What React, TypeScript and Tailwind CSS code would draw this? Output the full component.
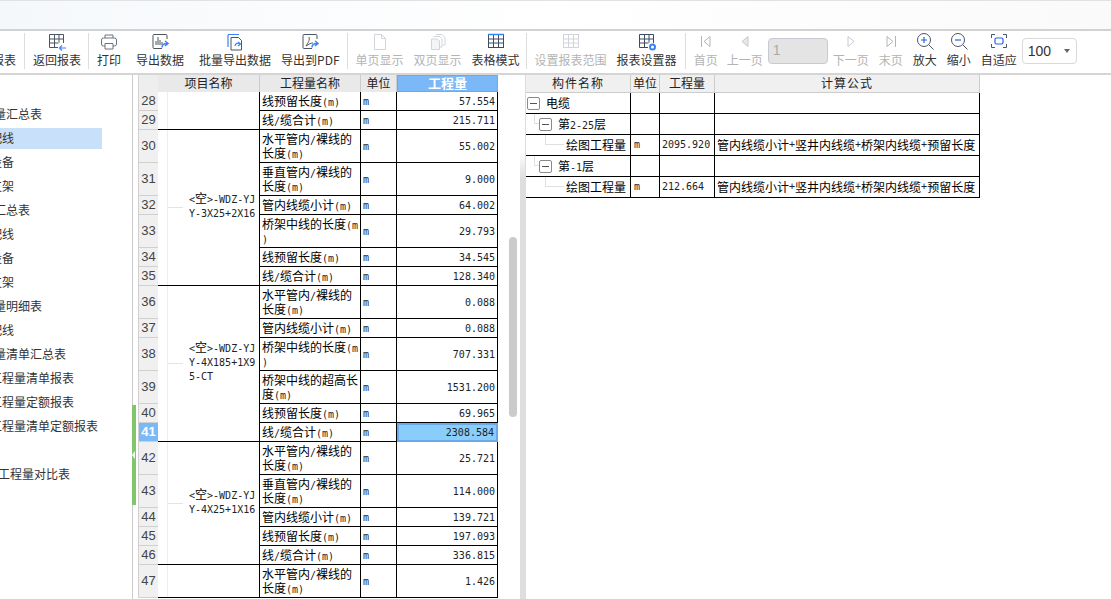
import React from "react";

const CJK = '"Noto Sans CJK SC", sans-serif';

// table text: ascii is half the width of a chinese char, like the old song font
const Mixed = ({ text }: { text: string }) => (
  <>
    {text.split(/([\x00-\x7f]+)/).map((part, i) =>
      /^[\x00-\x7f]+$/.test(part) ? (
        <span key={i} className="font-['DejaVu_Sans_Mono',monospace] text-[10px] leading-[10px] text-[#222]">
          {part}
        </span>
      ) : (
        <span key={i}>{part}</span>
      ),
    )}
  </>
);

const GridIcon = ({ color, top }: { color: string; top?: string }) => (
  <>
    <rect x="2.5" y="2.5" width="15" height="13" fill="none" stroke={color} />
    <path d="M2.5 7h15M2.5 11h15M7.5 2.5v13M12.5 2.5v13" stroke={color} fill="none" />
    {top && <path d="M2 2.5h16" stroke={top} strokeWidth="1.5" />}
  </>
);

const Arrow = () => <path d="M12 15.5c0-3 2-4 5-4M15 9l3 2.5-3 2.5" stroke="#3b82f6" strokeWidth="1.5" fill="none" />;

const icons: Record<string, React.ReactNode> = {
  back: (
    <>
      <path d="M11 15.5H2.5v-13h14V11M2.5 7h14M2.5 11h9M7.5 2.5v13M12 2.5v8" stroke="#4b5563" fill="none" />
      <path d="M19 16h-6M15 13.5 12.5 16l2.5 2.5" stroke="#3b82f6" strokeWidth="1.2" fill="none" />
    </>
  ),
  print: (
    <>
      <path d="M6 6V3h8v3" stroke="#6b7280" fill="none" />
      <rect x="2.5" y="6" width="15" height="8" rx="2" stroke="#6b7280" fill="none" />
      <path d="M6 11.5h8V17H6z" stroke="#6b7280" fill="white" />
    </>
  ),
  data: (
    <>
      <path d="M17 7V3.5a1 1 0 0 0-1-1H4a1 1 0 0 0-1 1v12a1 1 0 0 0 1 1h8" stroke="#4b5563" fill="none" />
      <path d="M6 13V9M8 13V5M10 13V8M12 13V10" stroke="#4b5563" fill="none" />
      <Arrow />
    </>
  ),
  batch: (
    <>
      <path d="M3 15V3.5a1 1 0 0 1 1-1h10" stroke="#3b82f6" strokeWidth="1.2" fill="none" />
      <path d="M6 5.5h7.500l3 3V18H6z" stroke="#4b5563" fill="white" />
      <path d="M10 14a3 3 0 0 1 5-2M13 10l2.500 2-2.500 2" stroke="#3b82f6" strokeWidth="1.300" fill="none" />
    </>
  ),
  pdf: (
    <>
      <path d="M17 7V3.500a1 1 0 0 0-1-1H4a1 1 0 0 0-1 1v12a1 1 0 0 0 1 1h8" stroke="#4b5563" fill="none" />
      <path d="M9 5c1 3-1 6-3 9 3-2 5-3 7-3" stroke="#4b5563" fill="none" />
      <Arrow />
    </>
  ),
  single: <path d="M4.500 2.500h7l4 4v11h-11zM11.500 2.500v4h4" stroke="#d1d5db" fill="none" />,
  double: (
    <>
      <path d="M8 2.500h6l3 3V13h-2" stroke="#d1d5db" fill="none" />
      <path d="M5.500 4.500H12l2 2V15h-2" stroke="#d1d5db" fill="none" />
      <path d="M3.500 7h6l2 2v8.500h-8z" stroke="#d1d5db" fill="#f3f4f6" />
    </>
  ),
  table: <GridIcon color="#3f4a63" top="#3b82f6" />,
  range: <GridIcon color="#d1d5db" />,
  setting: (
    <>
      <path d="M11 15.500H2.500v-13h14V11M2.500 7h14M2.500 11h9M7.500 2.500v13M12 2.500v8" stroke="#3f4a63" fill="none" />
      <circle cx="15.500" cy="15" r="2.500" stroke="#3b82f6" strokeWidth="2" fill="none" />
    </>
  ),
  first: <path d="M5.500 4v11M14 4.500v10L8 9.500z" stroke="#b0b5bd" fill="none" />,
  prev: <path d="M13 4.500v10L7 9.500z" stroke="#c5c9cf" fill="#e5e7eb" />,
  next: <path d="M7 4.500v10l6-5z" stroke="#c5c9cf" fill="none" />,
  last: <path d="M14.500 4v11M6 4.500v10l6-5z" stroke="#b0b5bd" fill="none" />,
  zoomin: (
    <>
      <circle cx="9" cy="8" r="6.500" stroke="#4b5563" fill="none" />
      <path d="M14 13l4.500 4.500" stroke="#4b5563" fill="none" />
      <path d="M6 8h6M9 5v6" stroke="#2563eb" strokeWidth="1.200" />
    </>
  ),
  zoomout: (
    <>
      <circle cx="9" cy="8" r="6.500" stroke="#4b5563" fill="none" />
      <path d="M14 13l4.500 4.500" stroke="#4b5563" fill="none" />
      <path d="M6 8h6" stroke="#2563eb" strokeWidth="1.200" />
    </>
  ),
  fit: (
    <>
      <path d="M2.500 6V2.500H6M14 2.500h3.500V6M17.500 12v3.500H14M6 15.500H2.500V12" stroke="#4b5563" fill="none" />
      <rect x="6" y="6" width="8" height="6" rx="1.500" stroke="#2563eb" strokeWidth="1.200" fill="none" />
    </>
  ),
};

const ToolItem = ({
  icon,
  label,
  off,
  className = "",
}: {
  icon?: string;
  label: string;
  off?: boolean;
  className?: string;
}) => (
  <div className={`flex flex-col items-center px-[5px] pt-[1px] shrink-0 ${className}`}>
    <svg width="20" height="20" viewBox="0 0 20 20">
      {icon ? icons[icon] : null}
    </svg>
    <span className={`text-[12px] leading-[16px] whitespace-nowrap ${off ? "text-[#b4b4b4]" : "text-[#333]"}`}>
      {label}
    </span>
  </div>
);

const Sep = ({ className = "ml-[2px]" }: { className?: string }) => (
  <div className={`w-px h-[36px] bg-[#ddd] mr-[3px] mt-[2px] shrink-0 ${className}`} />
);

const Toolbar = () => (
  <div className="h-[42px] flex items-start shrink-0 overflow-hidden -ml-[14px]">
    <ToolItem label="报表" className="w-[36px]" />
    <Sep />
    <ToolItem icon="back" label="返回报表" />
    <Sep />
    <ToolItem icon="print" label="打印" />
    <ToolItem icon="data" label="导出数据" className="ml-[5px]" />
    <ToolItem icon="batch" label="批量导出数据" className="ml-[5px]" />
    <ToolItem icon="pdf" label="导出到PDF" />
    <Sep />
    <ToolItem icon="single" label="单页显示" off />
    <ToolItem icon="double" label="双页显示" off />
    <ToolItem icon="table" label="表格模式" />
    <Sep className="ml-[1px]" />
    <ToolItem icon="range" label="设置报表范围" off />
    <ToolItem icon="setting" label="报表设置器" />
    <Sep className="ml-[3px]" />
    <ToolItem icon="first" label="首页" off />
    <ToolItem icon="prev" label="上一页" off className="-ml-[1px]" />
    <div className="w-[60px] h-[26px] mt-[7px] shrink-0 bg-[#e4e4e4] border border-[#c6cad3] rounded-[4px] px-[4px] text-[14px] leading-[22px] text-[#aaa] font-['Liberation_Sans',sans-serif]">
      1
    </div>
    <ToolItem icon="next" label="下一页" off />
    <ToolItem icon="last" label="末页" off />
    <ToolItem icon="zoomin" label="放大" />
    <ToolItem icon="zoomout" label="缩小" />
    <ToolItem icon="fit" label="自适应" />
    <div className="w-[55px] h-[26px] mt-[7px] shrink-0 bg-white border border-[#d9d9d9] rounded-[4px] pl-[5px] pr-[6px] flex items-center justify-between text-[14px] text-[#333] font-['Liberation_Sans',sans-serif]">
      100
      <span className="w-0 h-0 border-x-[3px] border-x-transparent border-t-[4px] border-t-[#666]" />
    </div>
  </div>
);

const sideRows = [
  { text: "工程量汇总表", w: "w-[42px]" },
  { text: "配管配线", w: "w-[14px]", active: true },
  { text: "电气设备", w: "w-[14px]" },
  { text: "桥架支架", w: "w-[14px]" },
  { text: "量汇总表", w: "w-[30px]" },
  { text: "配管配线", w: "w-[14px]" },
  { text: "电气设备", w: "w-[14px]" },
  { text: "桥架支架", w: "w-[14px]" },
  { text: "工程量明细表", w: "w-[42px]" },
  { text: "配管配线", w: "w-[14px]" },
  { text: "工程量清单汇总表", w: "w-[66px]" },
  { text: "部工程量清单报表", w: "w-[74px]" },
  { text: "部工程量定额报表", w: "w-[74px]" },
  { text: "部工程量清单定额报表", w: "w-[98px]" },
  { text: "", w: "w-[14px]" },
  { text: "部工程量对比表", w: "w-[70px]" },
];

const Sidebar = () => (
  <div className="w-[133px] shrink-0 border-r border-[#ccc] pt-[27px] overflow-hidden">
    {sideRows.map((r, i) => (
      <div key={i} className="h-[24px] flex items-center">
        <div className={`h-[21px] flex items-center ${r.active ? "w-[102px] bg-[#c9e0fa]" : ""}`}>
          <div className={`${r.w} flex justify-end whitespace-nowrap text-[12px] text-[#333]`}>{r.text}</div>
        </div>
      </div>
    ))}
  </div>
);

type Row = { no: number; name: string; qty: string; tall?: boolean; hit?: boolean };
type Group = { title: string; span: string; rows: Row[] };

const WIRE1 = "水平管内/裸线的长度(m)";
const WIRE2 = "垂直管内/裸线的长度(m)";
const SUB = "管内线缆小计(m)";
const TRAY = "桥架中线的长度(m)";
const RES = "线预留长度(m)";
const SUM = "线/缆合计(m)";

const groups: Group[] = [
  {
    title: "",
    span: "row-span-2",
    rows: [
      { no: 28, name: RES, qty: "57.554" },
      { no: 29, name: SUM, qty: "215.711" },
    ],
  },
  {
    title: "<空>-WDZ-YJY-3X25+2X16",
    span: "row-span-6",
    rows: [
      { no: 30, name: WIRE1, qty: "55.002", tall: true },
      { no: 31, name: WIRE2, qty: "9.000", tall: true },
      { no: 32, name: SUB, qty: "64.002" },
      { no: 33, name: TRAY, qty: "29.793", tall: true },
      { no: 34, name: RES, qty: "34.545" },
      { no: 35, name: SUM, qty: "128.340" },
    ],
  },
  {
    title: "<空>-WDZ-YJY-4X185+1X95-CT",
    span: "row-span-6",
    rows: [
      { no: 36, name: WIRE1, qty: "0.088", tall: true },
      { no: 37, name: SUB, qty: "0.088" },
      { no: 38, name: TRAY, qty: "707.331", tall: true },
      { no: 39, name: "桥架中线的超高长度(m)", qty: "1531.200", tall: true },
      { no: 40, name: RES, qty: "69.965" },
      { no: 41, name: SUM, qty: "2308.584", hit: true },
    ],
  },
  {
    title: "<空>-WDZ-YJY-4X25+1X16",
    span: "row-span-5",
    rows: [
      { no: 42, name: WIRE1, qty: "25.721", tall: true },
      { no: 43, name: WIRE2, qty: "114.000", tall: true },
      { no: 44, name: SUB, qty: "139.721" },
      { no: 45, name: RES, qty: "197.093" },
      { no: 46, name: SUM, qty: "336.815" },
    ],
  },
  {
    title: "",
    span: "row-span-1",
    rows: [{ no: 47, name: WIRE1, qty: "1.426", tall: true }],
  },
];

const headCell = "h-[17px] pb-[1px] bg-[#e9e9e9] border-r border-[#ccc] flex items-center justify-center text-[12px] text-[#222]";

const ReportTable = () => (
  <div className="w-[360px] shrink-0 overflow-hidden ml-[5px]">
    <div className="grid grid-cols-[20px_102px_101px_36px_101px] text-[12px] leading-[14px] text-black">
      <div className="h-[17px] bg-[#eee] border-l border-[#d4d4d4]" />
      <div className={headCell}>项目名称</div>
      <div className={headCell}>工程量名称</div>
      <div className={headCell}>单位</div>
      <div className="h-[17px] pb-[1px] bg-[#7bb8f8] border border-[#6fa9e6] flex items-center justify-center text-[13px] font-bold text-white">
        工程量
      </div>
      {groups.map((g) =>
        g.rows.map((r, i) => (
          <React.Fragment key={r.no}>
            <div
              className={`${r.tall ? "h-[33px]" : "h-[19px]"} border-b border-l border-[#d0d0d0] flex items-center justify-center font-['Liberation_Sans',sans-serif] text-[13px] ${
                r.hit ? "bg-[#7bb8f8] text-white font-bold" : "bg-[#f0f0f0] text-[#444]"
              }`}
            >
              {r.no}
            </div>
            {i === 0 && (
              <div className={`${g.span} min-h-0 border-b border-r border-black flex items-center pl-[9px]`}>
                <div className="self-stretch w-[16px] border-l border-[#eee] flex items-center shrink-0">
                  {g.title && <div className="h-px w-full bg-[#e4e4e4]" />}
                </div>
                <div className="w-[68px] ml-[6px] mb-[5px] break-all [line-break:anywhere]">
                  <Mixed text={g.title} />
                </div>
              </div>
            )}
            <div
              className={`${r.tall ? "h-[33px]" : "h-[19px]"} overflow-hidden border-b border-r border-black pl-[2px] pr-[1px] pb-[1px] flex items-center break-all [line-break:anywhere]`}
            >
              <div className="w-full">
                <Mixed text={r.name} />
              </div>
            </div>
            <div className="min-h-0 border-b border-r border-black px-[2px] pt-[1px] flex items-center">
              <Mixed text="m" />
            </div>
            <div
              className={`min-h-0 flex items-center justify-end pr-[2px] ${
                r.hit ? "bg-[#89cdfb] border-2 border-[#6aa9ea]" : "border-b border-r border-black pt-[1px]"
              }`}
            >
              <Mixed text={r.qty} />
            </div>
          </React.Fragment>
        )),
      )}
    </div>
  </div>
);

const Box = () => (
  <span className="w-[13px] h-[13px] border border-[#8a8a8a] rounded-[2px] flex items-center justify-center shrink-0">
    <span className="w-[7px] h-px bg-[#555]" />
  </span>
);

const detailHead = "h-[18px] pb-[1px] bg-[#f0f0f0] border-r border-b border-[#ccc] flex items-center justify-center text-[12px] text-[#222]";
const cell = "h-[21px] border-r border-b border-black flex items-center";
const FORMULA = "管内线缆小计+竖井内线缆+桥架内线缆+预留长度";

const DetailRow = ({ children, unit, qty, formula }: { children: React.ReactNode; unit?: string; qty?: string; formula?: string }) => (
  <>
    <div className={cell}>{children}</div>
    <div className={`${cell} pl-[3px]`}>{unit && <Mixed text={unit} />}</div>
    <div className={`${cell} pl-[2px]`}>{qty && <Mixed text={qty} />}</div>
    <div className={`${cell} pl-[2px] pb-[1px] whitespace-nowrap overflow-hidden`}>{formula && <Mixed text={formula} />}</div>
  </>
);

const Branch = ({ indent, width }: { indent: string; width: string }) => (
  <span className={`self-start h-1/2 border-l border-b border-[#e0e0e0] shrink-0 ${indent} ${width}`} />
);

const DetailTable = () => (
  <div className="w-[454px] shrink-0 grid grid-cols-[105px_29px_55px_265px] content-start text-[12px] leading-[14px] text-black">
    <div className={`${detailHead} tracking-[1px]`}>构件名称</div>
    <div className={detailHead}>单位</div>
    <div className={detailHead}>工程量</div>
    <div className={`${detailHead} tracking-[1px]`}>计算公式</div>
    <DetailRow>
      <span className="ml-[1px] flex items-center gap-[6px]">
        <Box />
        电缆
      </span>
    </DetailRow>
    <DetailRow>
      <Branch indent="ml-[8px]" width="w-[5px]" />
      <Box />
      <span className="ml-[6px]">
        <Mixed text="第2-25层" />
      </span>
    </DetailRow>
    <DetailRow unit="m" qty="2095.920" formula={FORMULA}>
      <Branch indent="ml-[19px]" width="w-[19px]" />
      <span className="ml-[2px] whitespace-nowrap">绘图工程量</span>
    </DetailRow>
    <DetailRow>
      <Branch indent="ml-[8px]" width="w-[5px]" />
      <Box />
      <span className="ml-[6px]">
        <Mixed text="第-1层" />
      </span>
    </DetailRow>
    <DetailRow unit="m" qty="212.664" formula={FORMULA}>
      <Branch indent="ml-[19px]" width="w-[19px]" />
      <span className="ml-[2px] whitespace-nowrap">绘图工程量</span>
    </DetailRow>
  </div>
);

export default function App() {
  return (
    <div className="relative w-[1111px] h-[599px] overflow-hidden bg-white flex flex-col" style={{ fontFamily: CJK }}>
      <div className="h-[31px] shrink-0 border-t border-t-[#e2e2e2] border-b-2 border-b-[#d2d2d2] bg-linear-to-r from-[#f5f8fb] via-white to-[#fafafa]" />
      <Toolbar />
      <div className="h-[2px] shrink-0 bg-[#d5d5d5]" />
      <div className="flex-1 flex min-h-0">
        <Sidebar />
        <ReportTable />
        <div className="w-[22px] shrink-0 pl-[11px] pt-[162px]">
          <div className="w-[8px] h-[180px] rounded-full bg-[#cbcbcb]" />
        </div>
        <div className="w-[6px] shrink-0 flex flex-col border-r border-[#ddd]">
          <div className="h-[75px]" />
          <div className="h-[30px] bg-linear-to-b from-white to-[#dedede]" />
          <div className="flex-1 bg-[#dedede]" />
        </div>
        <DetailTable />
      </div>
      <div className="absolute left-[132px] top-[405px] w-[4px] h-[100px] bg-[#82c66c] flex items-center">
        <span className="w-0 h-0 border-y-[4px] border-y-transparent border-r-[3px] border-r-white" />
      </div>
    </div>
  );
}
